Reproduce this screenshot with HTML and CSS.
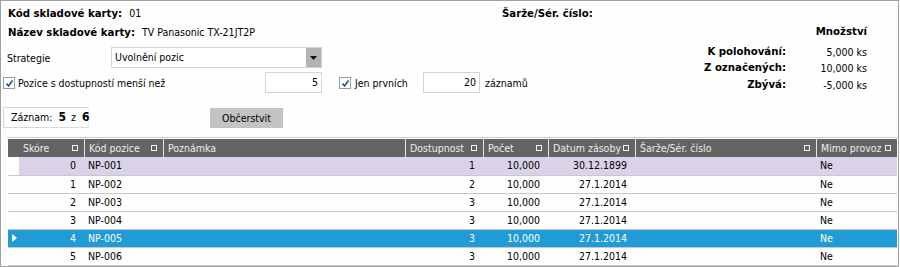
FILE: index.html
```html
<!DOCTYPE html>
<html lang="cs">
<head>
  <meta charset="UTF-8" />
  <title>Polohování skladové karty</title>
  <link rel="stylesheet" href="styles.css">
</head>
<body>

<div class="frame">
  <div class="top">
    <div class="left">
      <div class="info"><b>Kód skladové karty:</b><span class="val">01</span></div>
      <div class="info"><b>Název skladové karty:</b><span class="val">TV Panasonic TX-21JT2P</span></div>

      <div class="row-strategie">
        <span class="lbl-strategie">Strategie</span>
        <div class="select">
          <span class="select-text">Uvolnění pozic</span>
          <span class="select-btn">
            <svg width="7" height="4" viewBox="0 0 7 4"><path d="M0 0h7L3.5 4z" fill="#111"/></svg>
          </span>
        </div>
      </div>

      <div class="row-filtr">
        <label class="chk chk-pozice">
          <span class="box"><svg width="9" height="9" viewBox="0 0 9 9"><path d="M1.5 4.5l2 2.5 4-5.5" fill="none" stroke="#2b4f8c" stroke-width="1.6"/></svg></span>
          Pozice s dostupností menší než
        </label>
        <span class="num">5</span>
        <label class="chk chk-jen">
          <span class="box"><svg width="9" height="9" viewBox="0 0 9 9"><path d="M1.5 4.5l2 2.5 4-5.5" fill="none" stroke="#2b4f8c" stroke-width="1.6"/></svg></span>
          Jen prvních
        </label>
        <span class="num">20</span>
        <span class="suffix">záznamů</span>
      </div>

      <div class="row-zaznam">
        <div class="zaznam">Záznam: <b>5</b> z <b>6</b></div>
        <button class="btn-obnov">Občerstvit</button>
      </div>
    </div>

    <div class="right">
      <div class="info"><b>Šarže/Sér. číslo:</b></div>
      <div class="summary">
        <span></span><b class="sum-head">Množství</b>
        <b>K polohování:</b><span>5,000 ks</span>
        <b>Z označených:</b><span>10,000 ks</span>
        <b>Zbývá:</b><span>-5,000 ks</span>
      </div>
    </div>
  </div>

  <div class="grid-wrap">
    <table class="grid">
      <colgroup>
        <col style="width:11px"><col style="width:65px"><col style="width:79px">
        <col style="width:242px"><col style="width:78px"><col style="width:65px">
        <col style="width:87px"><col style="width:181px"><col style="width:81px">
      </colgroup>
      <thead>
        <tr>
          <th></th>
          <th><div class="th"><span>Skóre</span><span class="flt"></span></div></th>
          <th class="sep"><div class="th"><span>Kód pozice</span><span class="flt"></span></div></th>
          <th class="sep"><div class="th"><span>Poznámka</span></div></th>
          <th class="sep"><div class="th"><span>Dostupnost</span><span class="flt"></span></div></th>
          <th class="sep"><div class="th"><span>Počet</span><span class="flt"></span></div></th>
          <th class="sep"><div class="th"><span>Datum zásoby</span><span class="flt"></span></div></th>
          <th class="sep"><div class="th"><span>Šarže/Sér. číslo</span><span class="flt"></span></div></th>
          <th class="sep"><div class="th"><span>Mimo provoz</span><span class="flt"></span></div></th>
        </tr>
      </thead>
      <tbody>
        <tr class="focused">
          <td class="ind"></td><td class="r">0</td><td>NP-001</td><td></td>
          <td class="r">1</td><td class="r">10,000</td><td class="r">30.12.1899</td><td></td><td>Ne</td>
        </tr>
        <tr>
          <td class="ind"></td><td class="r">1</td><td>NP-002</td><td></td>
          <td class="r">2</td><td class="r">10,000</td><td class="r">27.1.2014</td><td></td><td>Ne</td>
        </tr>
        <tr>
          <td class="ind"></td><td class="r">2</td><td>NP-003</td><td></td>
          <td class="r">3</td><td class="r">10,000</td><td class="r">27.1.2014</td><td></td><td>Ne</td>
        </tr>
        <tr>
          <td class="ind"></td><td class="r">3</td><td>NP-004</td><td></td>
          <td class="r">3</td><td class="r">10,000</td><td class="r">27.1.2014</td><td></td><td>Ne</td>
        </tr>
        <tr class="selected">
          <td class="ind"><svg width="5" height="8" viewBox="0 0 5 8"><path d="M0 0l5 4-5 4z" fill="#fff"/></svg></td>
          <td class="r">4</td><td>NP-005</td><td></td>
          <td class="r">3</td><td class="r">10,000</td><td class="r">27.1.2014</td><td></td><td>Ne</td>
        </tr>
        <tr>
          <td class="ind"></td><td class="r">5</td><td>NP-006</td><td></td>
          <td class="r">3</td><td class="r">10,000</td><td class="r">27.1.2014</td><td></td><td>Ne</td>
        </tr>
      </tbody>
    </table>
  </div>
</div>

</body>
</html>
```

FILE: styles.css
```css
/* Reset */
* {
  box-sizing: border-box;
}
body {
  margin: 0;
  font-family: 'DejaVu Sans Condensed', 'DejaVu Sans', sans-serif;
  font-size: 10.5px;
  color: #000;
  background: #fff;
}
b {
  font-size: 11.3px;
}

.frame {
  width: 899px;
  height: 267px;
  border: 1px solid #a0a0a0;
  background: #fefefe;
  overflow: hidden;
}

/* Horní část */
.top {
  display: flex;
}
.left {
  width: 501px;
  flex-shrink: 0;
  padding: 4px 0 0 2px;
}
.right {
  flex: 1;
  padding: 4px 31px 0 0;
}

.info {
  height: 16px;
  line-height: 16px;
  padding-left: 5px;
  white-space: nowrap;
}
.info + .info {
  margin-top: 3px;
}
.info .val {
  margin-left: 7px;
}
.right .info {
  padding-left: 0;
}

.row-strategie {
  display: flex;
  align-items: center;
  margin-top: 7px;
  height: 21px;
}
.lbl-strategie {
  width: 108px;
  flex-shrink: 0;
  padding-left: 4px;
}
.select {
  display: flex;
  width: 211px;
  flex-shrink: 0;
  height: 21px;
  border: 1px solid #d4d4d4;
  background: #fff;
}
.select-text {
  flex: 1;
  line-height: 19px;
  padding-left: 3px;
}
.select-btn {
  width: 15px;
  background: #b4b4b4;
  display: flex;
  align-items: center;
  justify-content: center;
}

.row-filtr {
  display: flex;
  align-items: center;
  margin-top: 4px;
  height: 21px;
}
.row-filtr > * {
  flex-shrink: 0;
}
.chk {
  display: flex;
  align-items: center;
  gap: 3px;
  white-space: nowrap;
}
.chk .box {
  width: 12px;
  height: 12px;
  border: 1px solid #9a9a9a;
  background: #fff;
  display: flex;
  align-items: center;
  justify-content: center;
  margin-top: 1px;
}
.chk-pozice {
  width: 262px;
}
.chk-jen {
  width: 84px;
  margin-left: 17px;
  gap: 4px;
}
.num {
  width: 57px;
  height: 21px;
  border: 1px solid #d4d4d4;
  background: #fff;
  text-align: right;
  line-height: 19px;
  padding-right: 3px;
}
.suffix {
  margin-left: 5px;
}

.row-zaznam {
  display: flex;
  align-items: center;
  margin-top: 14px;
  height: 21px;
}
.zaznam {
  width: 86px;
  flex-shrink: 0;
  height: 21px;
  line-height: 19px;
  border: 1px solid #d8d8d8;
  border-right-color: #efefef;
  padding-left: 7px;
  white-space: nowrap;
  word-spacing: 2px;
}
.zaznam b {
  font-size: 12px;
  margin-left: 1px;
}
.btn-obnov {
  margin-left: 121px;
  width: 73px;
  height: 20px;
  border: none;
  background: #c3c3c3;
  font-family: inherit;
  font-size: 10.5px;
  color: #000;
  padding: 0;
}

.summary {
  display: grid;
  grid-template-columns: auto 81px;
  justify-content: end;
  line-height: 16.5px;
  margin-top: 3px;
  text-align: right;
  white-space: nowrap;
}
.summary .sum-head {
  margin-bottom: 3px;
}

/* Tabulka */
.grid-wrap {
  margin: 9px 0 0 6px;
  border-top: 1px solid #d0d0d0;
  padding-top: 1px;
}
.grid {
  width: 889px;
  margin-left: 1px;
  table-layout: fixed;
  border-collapse: collapse;
}
.grid th {
  height: 18px;
  padding: 0;
  background: #646464;
  color: #ececec;
  font-weight: 400;
  text-align: left;
}
.grid th.sep {
  box-shadow: inset 1px 0 0 #e6e6e6;
}
.th {
  display: flex;
  align-items: center;
  justify-content: space-between;
  gap: 1px;
  padding: 0 6px 0 4px;
  white-space: nowrap;
}
.th span:first-child {
  overflow: hidden;
  min-width: 0;
}
.grid th.sep .th {
  padding-left: 5px;
}
.flt {
  width: 6px;
  height: 6px;
  border: 1px solid #f2f2f2;
  flex-shrink: 0;
}
.grid td {
  height: 18px;
  padding: 0 4px;
  line-height: 17px;
  border-bottom: 1px solid #c8c8c8;
  white-space: nowrap;
  overflow: hidden;
}
.grid td.r {
  text-align: right;
  padding-right: 8px;
}
.grid td.ind {
  padding: 0 0 0 4px;
}
.grid td.ind svg {
  display: block;
}
.grid tr.focused td {
  background: #d9d2e9;
}
.grid tr.focused td.ind {
  background: #fff;
}
.grid tr.selected td {
  background: #219bd5;
  color: #fff;
}
```
